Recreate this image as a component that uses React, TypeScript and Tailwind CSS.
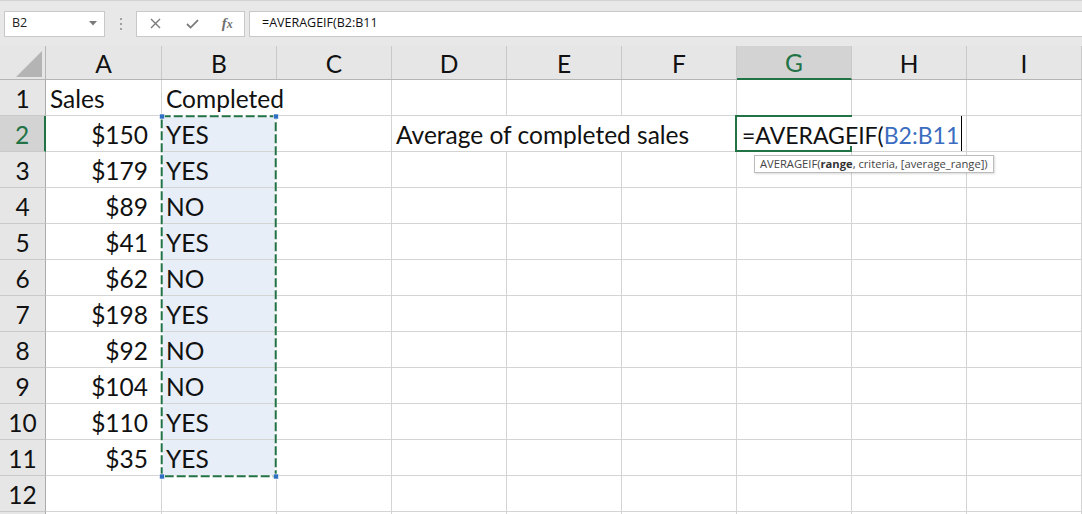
import React from "react";

const cols = ["A", "B", "C", "D", "E", "F", "G", "H", "I"];

const sales: [string, string][] = [
  ["$150", "YES"],
  ["$179", "YES"],
  ["$89", "NO"],
  ["$41", "YES"],
  ["$62", "NO"],
  ["$198", "YES"],
  ["$92", "NO"],
  ["$104", "NO"],
  ["$110", "YES"],
  ["$35", "YES"],
];

const cellFont = { fontFamily: "Lato, 'Open Sans', sans-serif" };
const uiFont = { fontFamily: "'Open Sans', 'Noto Sans', sans-serif" };

const gridCols =
  "grid grid-cols-[46px_116px_115px_115px_115px_115px_115px_115px_115px_115px]";

const Toolbar = () => (
  <div className="h-[46px] bg-[#e8e8e8] border-t border-[#d2d2d2] flex items-center relative" style={uiFont}>
    <div className="ml-[4px] w-[101px] h-[26px] bg-white border border-[#c8c8c8] flex items-center justify-between px-[7px] text-[12.5px] text-[#222]">
      <span>B2</span>
      <svg width="8" height="5" viewBox="0 0 8 5">
        <path d="M0 0 L8 0 L4 4.5 Z" fill="#7a7a7a" />
      </svg>
    </div>
    <div className="w-[31px] flex flex-col items-center gap-[3px]">
      <span className="w-[2px] h-[2px] bg-[#a0a0a0]" />
      <span className="w-[2px] h-[2px] bg-[#a0a0a0]" />
      <span className="w-[2px] h-[2px] bg-[#a0a0a0]" />
    </div>
    <div className="w-[109px] h-[26px] bg-white border border-[#c8c8c8] flex items-center">
      <div className="w-[38px] flex justify-center">
        <svg width="11" height="11" viewBox="0 0 11 11">
          <path d="M1 1 L10 10 M10 1 L1 10" stroke="#7a7a7a" strokeWidth="1.4" />
        </svg>
      </div>
      <div className="w-[36px] flex justify-center">
        <svg width="13" height="10" viewBox="0 0 13 10">
          <path d="M1 5 L4.6 8.6 L12 1.2" stroke="#7a7a7a" strokeWidth="1.8" fill="none" />
        </svg>
      </div>
      <div
        className="w-[34px] flex justify-center items-baseline text-[15px] italic font-bold text-[#6f6f6f]"
        style={{ fontFamily: "'Liberation Serif', serif" }}
      >
        f<span className="text-[12px]">x</span>
      </div>
    </div>
    <div className="ml-[4px] flex-1 h-[26px] bg-white border border-r-0 border-[#c8c8c8] flex items-center pl-[12px] text-[12.5px] text-[#111]">
      =AVERAGEIF(B2:B11
    </div>
  </div>
);

const HeaderRow = () => (
  <div className={`${gridCols} h-[34px] bg-[#e6e6e6] border-b border-[#b5b5b5] leading-none`}>
    <div className="border-r border-[#b5b5b5] relative flex items-end justify-end pr-[3px] pb-[2px]">
      <svg width="26" height="26" viewBox="0 0 26 26">
        <path d="M26 0 L26 26 L0 26 Z" fill="#b4b4b4" />
      </svg>
    </div>
    {cols.map((c) =>
      c === "G" ? (
        <div
          key={c}
          className="bg-[#d3d3d3] border-r border-[#c9c9c9] border-b-2 border-b-[#217346] -mb-px flex items-center justify-center pt-[3px] text-[24.5px] text-[#217346]"
          style={cellFont}
        >
          {c}
        </div>
      ) : (
        <div
          key={c}
          className="border-r border-[#c9c9c9] flex items-center justify-center pt-[3px] text-[24.5px] text-[#111]"
          style={cellFont}
        >
          {c}
        </div>
      )
    )}
  </div>
);

const RowHead = ({ n, blank }: { n: number; blank?: boolean }) =>
  n === 2 ? (
    <div className="bg-[#d3d3d3] border-r-2 border-[#217346] border-b border-b-[#c9c9c9] flex items-center justify-center pt-[4px] text-[#217346]">
      {n}
    </div>
  ) : (
    <div className="bg-[#e6e6e6] border-r border-[#ababab] border-b border-b-[#c9c9c9] flex items-center justify-center pt-[4px] text-[#111]">
      {blank ? "" : n}
    </div>
  );

const Cell = ({
  children,
  right,
  noBorder,
  fill,
}: {
  children?: React.ReactNode;
  right?: boolean;
  noBorder?: boolean;
  fill?: boolean;
}) => (
  <div
    className={`relative flex items-center whitespace-nowrap pt-[4px] border-b border-[#d4d4d4] ${
      noBorder ? "" : "border-r"
    } ${fill ? "bg-[#e8eef7]" : ""} ${right ? "justify-end pr-[13px]" : "pl-[4px]"}`}
  >
    {children}
  </div>
);

const Empty = ({ count }: { count: number }) => (
  <>
    {[...Array(count)].map((_, i) => (
      <Cell key={i} />
    ))}
  </>
);

export default function App() {
  return (
    <div className="w-[1082px] h-[514px] overflow-hidden bg-white" style={cellFont}>
      <Toolbar />
      <div className="relative">
        <HeaderRow />
        <div className="text-[24.5px] leading-none text-[#111]">
          {/* row 1 */}
          <div className={`${gridCols} h-[36px]`}>
            <RowHead n={1} />
            <Cell>Sales</Cell>
            <Cell noBorder>Completed</Cell>
            <Empty count={7} />
          </div>
          {sales.map(([amount, done], i) => {
            const n = i + 2;
            return (
              <div key={n} className={`${gridCols} h-[36px]`}>
                <RowHead n={n} />
                <Cell right>{amount}</Cell>
                <Cell fill>{done}</Cell>
                <Cell />
                {n === 2 ? (
                  <>
                    <Cell noBorder>Average of completed sales</Cell>
                    <Cell noBorder />
                    <Cell noBorder />
                    <Cell noBorder>
                      <span className="pl-px text-[23px]">=AVERAGEIF(</span>
                      <span className="text-[23px] text-[#3a6cc0]">B2:B11</span>
                      <span className="ml-[2px] -mt-[4px] shrink-0 w-px h-[35px] bg-black" />
                      <div className="absolute left-[-2px] top-[-1px] w-[117px] h-[37px] border-2 border-r-0 border-[#217346]" />
                      <div className="absolute left-[113px] bottom-[0px] w-[2px] h-[5px] bg-[#217346]" />
                    </Cell>
                    <Cell />
                    <Cell />
                  </>
                ) : (
                  <Empty count={6} />
                )}
              </div>
            );
          })}
          {[12, 13].map((n) => (
            <div key={n} className={`${gridCols} h-[36px]`}>
              <RowHead n={n} blank={n === 13} />
              <Empty count={9} />
            </div>
          ))}
        </div>

        {/* copy range marquee */}
        <svg className="absolute left-0 top-0 pointer-events-none" width="300" height="440">
          <rect x="161.7" y="70.3" width="114" height="360" fill="none" stroke="#ffffff" strokeWidth="2" />
          <rect
            x="161.7"
            y="70.3"
            width="114"
            height="360"
            fill="none"
            stroke="#217346"
            strokeWidth="2"
            strokeDasharray="9 3"
          />
          <rect x="159.5" y="68" width="5" height="5" fill="#2f6fc2" stroke="#fff" strokeWidth="0.6" />
          <rect x="273.5" y="68" width="5" height="5" fill="#2f6fc2" stroke="#fff" strokeWidth="0.6" />
          <rect x="159.5" y="428" width="5" height="5" fill="#2f6fc2" stroke="#fff" strokeWidth="0.6" />
          <rect x="273.5" y="428" width="5" height="5" fill="#2f6fc2" stroke="#fff" strokeWidth="0.6" />
        </svg>

        {/* function tooltip */}
        <div
          className="absolute left-[754px] top-[109px] h-[18px] px-[5px] bg-white border border-[#bcbcbc] shadow-[1px_1px_2px_rgba(0,0,0,0.15)] flex items-center text-[11.2px] text-[#444] whitespace-nowrap"
          style={uiFont}
        >
          AVERAGEIF(<b className="font-bold text-[#333]">range</b>, criteria, [average_range])
        </div>
      </div>
    </div>
  );
}
